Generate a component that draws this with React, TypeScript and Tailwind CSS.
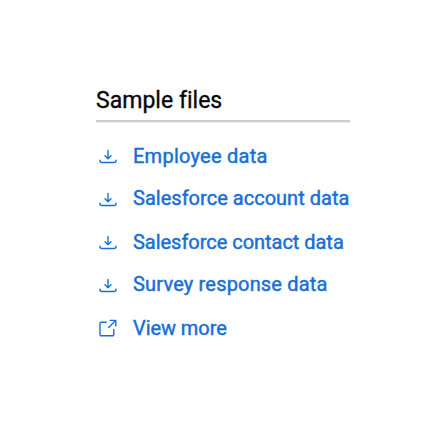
import type { ReactNode } from 'react';

type SampleLink = {
  label: string;
  icon: 'download' | 'external';
  // tracking and baseline nudge of the label
  className: string;
};

const links: SampleLink[] = [
  { label: 'Employee data', icon: 'download', className: 'tracking-[0.25px]' },
  { label: 'Salesforce account data', icon: 'download', className: 'tracking-[0.02px] pb-[2px]' },
  { label: 'Salesforce contact data', icon: 'download', className: 'tracking-[-0.03px]' },
  { label: 'Survey response data', icon: 'download', className: 'tracking-[0.18px] pb-[2px]' },
  { label: 'View more', icon: 'external', className: 'tracking-[-0.07px]' },
];

function Icon({ children }: { children: ReactNode }) {
  return (
    <svg
      width="20"
      height="20"
      viewBox="0 0 20 20"
      fill="none"
      stroke="currentColor"
      strokeWidth="1.4"
      strokeLinecap="round"
      strokeLinejoin="round"
      className="shrink-0"
    >
      {children}
    </svg>
  );
}

function DownloadIcon() {
  return (
    <Icon>
      <path d="M10 4.4v8.2M7 9.8l3 3 3-3" />
      <path d="M2 14.2v.3a2 2 0 0 0 2 2h12a2 2 0 0 0 2-2v-.3" />
    </Icon>
  );
}

function ExternalIcon() {
  return (
    <Icon>
      <path d="M8.2 4.2H3.2A1.2 1.2 0 0 0 2 5.4v11.2a1.2 1.2 0 0 0 1.2 1.2h11.4a1.2 1.2 0 0 0 1.2-1.2v-5.2" />
      <path d="M10.6 9.5 17.6 2.5M12.2 2.4h5.6v5.6" />
    </Icon>
  );
}

export default function App() {
  return (
    <main className="h-[425px] w-[425px] bg-white pt-[84px] pl-[96px] font-['Roboto','Liberation_Sans',sans-serif]">
      <section className="w-[254px]">
        <h2 className="h-[36px] text-[23px] leading-[33px] font-normal tracking-[0.02px] whitespace-nowrap text-[#080808] [-webkit-text-stroke:0.35px_currentColor]">
          Sample files
        </h2>
        <hr className="h-[3px] border-0 border-t-2 border-[#cdcdcd] bg-[#ededed]" />
        <ul className="pt-[11px]">
          {links.map(({ label, icon, className }) => (
            <li key={label} className="h-[43px]">
              <a href="#" className="flex h-full items-center gap-[15px] pl-[2px] text-[#176fd6]">
                {icon === 'download' ? <DownloadIcon /> : <ExternalIcon />}
                <span
                  className={`text-[20px] leading-[24px] font-normal whitespace-nowrap [-webkit-text-stroke:0.45px_currentColor] ${className}`}
                >
                  {label}
                </span>
              </a>
            </li>
          ))}
        </ul>
      </section>
    </main>
  );
}
